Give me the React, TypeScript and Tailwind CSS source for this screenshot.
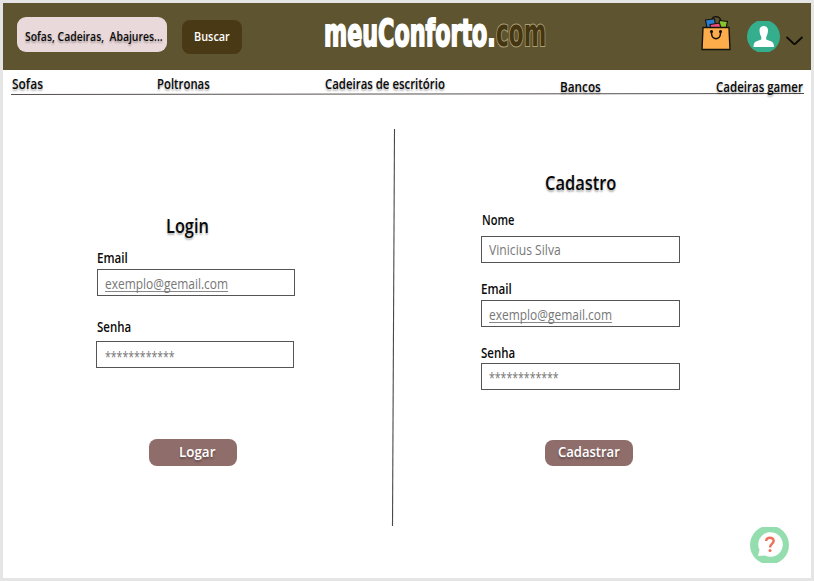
import { useLayoutEffect, useRef, useState } from "react";

/** Text condensed horizontally so that it fills the width of its box. */
function Fit({ text, className = "", underline = false }: { text: string; className?: string; underline?: boolean }) {
  const ref = useRef<HTMLSpanElement>(null);
  const [scale, setScale] = useState(1);
  useLayoutEffect(() => {
    const el = ref.current;
    if (el && el.parentElement) setScale(el.parentElement.clientWidth / el.offsetWidth);
  }, [text]);
  return (
    <div className={`shrink-0 leading-5 ${className}`}>
      <span
        ref={ref}
        className={`inline-block origin-left whitespace-pre align-top ${underline ? "underline decoration-[#888] decoration-1 underline-offset-2 [text-decoration-skip-ink:none]" : ""}`}
        style={{ transform: `scaleX(${scale})` }}
      >
        {text}
      </span>
    </div>
  );
}

const shadow = "[text-shadow:0_2px_2px_rgba(0,0,0,0.3)]";

function Bag() {
  return (
    <svg className="ml-[155px] mt-[12px] h-[36px] w-[30px] shrink-0" viewBox="0 0 30 36" fill="none" stroke="#15120b" strokeWidth="1.1">
      <path d="M11 4.500C12 0.500 19 0.500 20 6" strokeWidth="1.400" />
      <path d="M18.500 5.500L26.500 6.500L25 13H17Z" fill="#86c629" />
      <path d="M4.500 5L13.500 3.800L15 13H6Z" fill="#287cd0" />
      <path d="M9 9.500L18.500 8L20 13H9.500Z" fill="#ee4c7c" />
      <path d="M2 12.500H28L29 34.500H1Z" fill="#fcac4b" strokeWidth="1.400" strokeLinejoin="round" />
      <path d="M10.500 16.500V18C10.500 25.500 19.500 25.500 19.500 18V16.500" strokeWidth="1.500" />
      <circle cx="10.500" cy="16.500" r="1" fill="#15120b" />
      <circle cx="19.500" cy="16.500" r="1" fill="#15120b" />
    </svg>
  );
}

function Avatar() {
  return (
    <svg className="ml-[16px] mt-[18px] h-[31px] w-[33px] shrink-0" viewBox="0 0 33 31">
      <clipPath id="av"><rect width="33" height="31" /></clipPath>
      <circle cx="16.500" cy="15.500" r="16.500" fill="#35ae8e" clipPath="url(#av)" />
      <path d="M12.500 9C12.500 3.800 21 3.800 21 9C21 12.500 20 14.500 19.200 16V18.500L24.500 20.500Q27 21.500 27 26H6.500Q6.500 21.500 9 20.500L14.300 18.500V16C13.500 14.500 12.500 12.500 12.500 9Z" fill="#fff" />
    </svg>
  );
}

function Header() {
  return (
    <header className="flex h-[67px] shrink-0 items-start bg-[#5e542f]">
      <div className="ml-[14px] mt-[14px] flex h-[35px] w-[150px] shrink-0 rounded-[9px] bg-[#ead9da] pl-[8px] pt-[9px]">
        <Fit text="Sofas, Cadeiras,  Abajures..." className={`w-[138px] text-[13px] font-semibold ${shadow}`} />
      </div>
      <button className="ml-[15px] mt-[17px] flex h-[34px] w-[60px] shrink-0 rounded-[8px] bg-[#4a3915] pl-[12px] pt-[6px] text-white">
        <Fit text="Buscar" className="w-[36px] text-left text-[13px] font-semibold" />
      </button>
      <div className="ml-[82px] mt-[9px] flex font-['DejaVu_Sans'] font-bold">
        <Fit text="meuConforto." className="w-[172px] text-[38px] !leading-[43px] text-white [-webkit-text-stroke:2px_white]" />
        <Fit text="com" className="w-[50px] text-[38px] !leading-[43px] text-[#453510] [-webkit-text-stroke:2.2px_#aaa078] [paint-order:stroke_fill]" />
      </div>
      <Bag />
      <Avatar />
      <svg className="ml-[6px] mt-[31px] h-[13px] w-[18px] shrink-0" viewBox="0 0 18 13" fill="none" stroke="#0c0b08" strokeWidth="1.800">
        <path d="M0.500 3L7.500 9.500Q8.500 10.500 9.500 9.500L16.500 3" />
      </svg>
    </header>
  );
}

function Nav() {
  return (
    <nav className={`flex h-[24px] shrink-0 items-start pl-[9px] pt-[4px] text-[13.5px] font-semibold ${shadow}`}>
      <Fit text="Sofas" className="w-[31px]" />
      <Fit text="Poltronas" className="ml-[114px] w-[53px]" />
      <Fit text="Cadeiras de escritório" className="ml-[115px] w-[120px]" />
      <Fit text="Bancos" className="ml-[115px] mt-[3px] w-[41px]" />
      <Fit text="Cadeiras gamer" className="ml-[115px] mt-[3px] w-[87px]" />
    </nav>
  );
}

function Field({ value, width, className = "", pad = "pt-[4px]", underline = false }: { value: string; width: string; className?: string; pad?: string; underline?: boolean }) {
  return (
    <div className={`h-[27px] w-[199px] shrink-0 border border-[#555] pl-[7px] text-[14px] font-medium text-[#777] ${pad} ${className}`}>
      <Fit text={value} className={width} underline={underline} />
    </div>
  );
}

function Login() {
  return (
    <section className="flex w-[386px] shrink-0 flex-col pl-[94px] pt-[121px]">
      <Fit text="Login" className={`ml-[69px] w-[43px] text-[19px] font-semibold ${shadow}`} />
      <Fit text="Email" className="mt-[12px] w-[31px] text-[13.5px] font-semibold" />
      <Field value="exemplo@gemail.com" width="w-[123px]" className="mt-[1px] !w-[198px]" pad="pt-[3.500px]" underline />
      <Fit text="Senha" className="mt-[21px] w-[34px] text-[13.5px] font-semibold" />
      <Field value="************" width="w-[70px]" className="-ml-px mt-[4px] !w-[198px] pl-[8px]" pad="pt-[5px]" />
      <button className={`ml-[52px] mt-[71px] flex h-[27px] w-[88px] shrink-0 rounded-[8px] bg-[#8f6d6b] pl-[29.5px] pt-[3px] text-white ${shadow}`}>
        <Fit text="Logar" className="w-[36px] text-left text-[14.500px] font-semibold" />
      </button>
    </section>
  );
}

function Register() {
  return (
    <section className="flex flex-col pl-[83px] pt-[78px]">
      <Fit text="Cadastro" className={`ml-[63.5px] w-[71px] text-[19px] font-semibold ${shadow}`} />
      <Fit text="Nome" className="ml-[1px] mt-[17px] w-[32px] text-[13.5px] font-semibold" />
      <Field value="Vinicius Silva" width="w-[71.500px]" className="mt-[6px]" pad="pt-[2.500px]" />
      <Fit text="Email" className="mt-[16px] w-[31px] text-[13.5px] font-semibold" />
      <Field value="exemplo@gemail.com" width="w-[123px]" className="mt-[1px]" pad="pt-[3.500px]" underline />
      <Fit text="Senha" className="mt-[15.500px] w-[34px] text-[13.5px] font-semibold" />
      <Field value="************" width="w-[70px]" className="mt-[0.500px]" pad="pt-[4px]" />
      <button className={`ml-[64px] mt-[49.500px] flex h-[26px] w-[88px] shrink-0 rounded-[8px] bg-[#8f6d6b] pl-[13px] pt-[2px] text-white ${shadow}`}>
        <Fit text="Cadastrar" className="w-[62px] text-left text-[14.500px] font-semibold" />
      </button>
    </section>
  );
}

function Help() {
  return (
    <svg className="absolute bottom-[15px] right-[22px] h-[36px] w-[39px]" viewBox="0 0 39 36">
      <circle cx="19.500" cy="18" r="19.500" fill="#94ddae" />
      <path d="M8 29L9.500 23A12.300 12.300 0 1 1 15 28.500Z" fill="#fff" />
      <path d="M16.200 14C16 9.500 23.800 9.500 23.600 14C23.500 17 20 16.800 20 20.500" fill="none" stroke="#ed7059" strokeWidth="2.500" />
      <circle cx="20" cy="23.500" r="1.500" fill="#ed7059" />
    </svg>
  );
}

export default function App() {
  return (
    <div className="h-[581px] w-[814px] overflow-hidden bg-[#e5e5e5] p-[3px] font-['Open_Sans','Noto_Sans',sans-serif] text-[#090909]">
      <main className="relative flex h-[575px] w-[808px] flex-col bg-white">
        <Header />
        <Nav />
        <svg className="-mt-px ml-[8px] h-[2px] w-[793px] shrink-0" viewBox="0 0 793 2">
          <path d="M0 1.500L793 0.500" stroke="#55504f" strokeWidth="1" />
        </svg>
        <div className="flex flex-1">
          <Login />
          <svg className="mt-[31px] h-[400px] w-[9px] shrink-0" viewBox="0 0 9 400">
            <path d="M5.500 3L3.500 400" stroke="#494949" strokeWidth="1.100" />
          </svg>
          <Register />
        </div>
        <Help />
      </main>
    </div>
  );
}
